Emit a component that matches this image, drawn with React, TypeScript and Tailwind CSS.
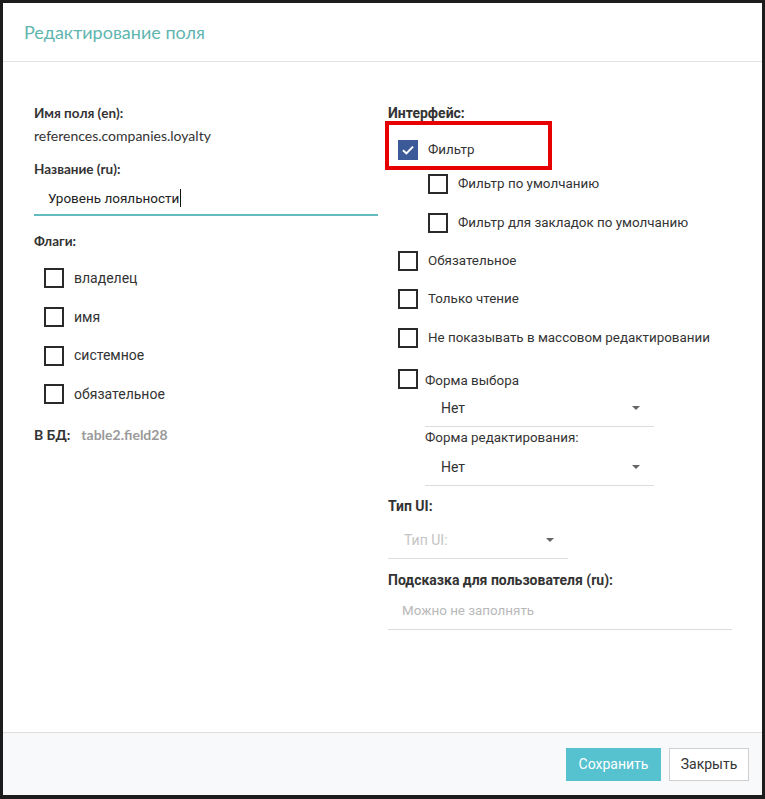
import React from "react";

const lato = { fontFamily: "Lato, 'Open Sans', sans-serif" };

const Box = ({ checked = false }: { checked?: boolean }) =>
  checked ? (
    <span className="flex h-[20px] w-[20px] shrink-0 items-center justify-center bg-[#3d5a98]">
      <svg width="14" height="12" viewBox="0 0 14 12" fill="none">
        <path d="M2 6.2 L5.4 9.4 L12 2.6" stroke="#fff" strokeWidth="2" />
      </svg>
    </span>
  ) : (
    <span className="block h-[20px] w-[20px] shrink-0 border-2 border-[#2a2a2a] bg-white" />
  );

const Row = ({
  label,
  checked,
  className,
}: {
  label: string;
  checked?: boolean;
  className: string;
}) => (
  <div className={"flex h-[20px] items-center gap-[10px] " + className}>
    <Box checked={checked} />
    <span className="text-[13.4px] text-[#333] font-['Roboto',sans-serif]">{label}</span>
  </div>
);

const Arrow = () => (
  <svg width="8" height="4" viewBox="0 0 8 4">
    <path d="M0 0 H8 L4 4 Z" fill="#666" />
  </svg>
);

const Select = ({
  value,
  placeholder,
  className,
}: {
  value: string;
  placeholder?: boolean;
  className: string;
}) => (
  <div
    className={
      "flex h-[37px] items-center justify-between border-b border-[#dcdcdc] pl-[16px] pr-[14px] font-['Roboto',sans-serif] text-[14px] " +
      (placeholder ? "text-[#c4c4c4] " : "text-[#333] ") +
      className
    }
  >
    <span>{value}</span>
    <Arrow />
  </div>
);

// left column labels
const Label = ({ children, className }: { children: React.ReactNode; className: string }) => (
  <div style={lato} className={"h-[18px] text-[13.5px] font-bold leading-[18px] text-[#333] " + className}>
    {children}
  </div>
);

// right column labels
const RLabel = ({ children, className }: { children: React.ReactNode; className: string }) => (
  <div className={"h-[18px] font-['Roboto',sans-serif] text-[14px] font-bold leading-[18px] text-[#333] " + className}>
    {children}
  </div>
);

export default function App() {
  return (
    <div className="h-[799px] w-[765px] bg-[#1c1c1c] pb-[4px] pl-[3px] pr-[3px] pt-[3px]">
      <div className="flex h-full flex-col bg-white">
        <div className="flex h-[59px] shrink-0 items-center border-b border-[#e3e3e3] pl-[21px]">
          <h1 style={lato} className="text-[18px] text-[#5fb5b0]">
            Редактирование поля
          </h1>
        </div>

        <div className="flex flex-1 gap-[10px] pl-[31px]">
          <div className="flex w-[344px] flex-col">
            <Label className="mt-[42px]">Имя поля (en):</Label>
            <div style={lato} className="mt-[4px] h-[20px] text-[14px] leading-[20px] text-[#333]">
              references.companies.loyalty
            </div>
            <Label className="mt-[14px]">Название (ru):</Label>
            <div className="mt-[4px] flex h-[34px] items-center border-b-2 border-[#62bcbf] pl-[14px] font-['Roboto',sans-serif] text-[13.5px] text-[#222]">
              Уровень лояльности
              <span className="ml-[1px] inline-block h-[18px] w-[1px] bg-[#111]" />
            </div>
            <Label className="mt-[16px]">Флаги:</Label>
            <div className="mt-[9px] flex flex-col pl-[10px]">
              {["владелец", "имя", "системное", "обязательное"].map((f) => (
                <div key={f} className="flex h-[38.7px] items-center gap-[10px]">
                  <Box />
                  <span className="text-[14px] text-[#333] font-['Roboto',sans-serif]">{f}</span>
                </div>
              ))}
            </div>
            <div style={lato} className="mt-[12px] flex h-[18px] items-center gap-[11px] text-[14px] font-bold">
              <span className="text-[#333]">В БД:</span>
              <span className="text-[#999]">table2.field28</span>
            </div>
          </div>

          <div className="flex w-[344px] flex-col">
            <RLabel className="mt-[42px]">Интерфейс:</RLabel>
            <div className="relative">
              <div className="pointer-events-none absolute left-[-3px] top-[-1px] h-[49px] w-[167px] border-[4px] border-[#e60000]" />
              <Row label="Фильтр" checked className="ml-[10px] mt-[18px]" />
            </div>
            <Row label="Фильтр по умолчанию" className="ml-[40px] mt-[14px]" />
            <Row label="Фильтр для закладок по умолчанию" className="ml-[40px] mt-[19px]" />
            <Row label="Обязательное" className="ml-[10px] mt-[18px]" />
            <Row label="Только чтение" className="ml-[10px] mt-[18px]" />
            <Row label="Не показывать в массовом редактировании" className="ml-[10px] mt-[19px]" />
            <div className="ml-[10px] mt-[21px] flex flex-col">
              <div className="flex h-[20px] items-center gap-[7px]">
                <Box />
                <span className="mt-[5px] text-[13.4px] text-[#333] font-['Roboto',sans-serif]">
                  Форма выбора
                </span>
              </div>
              <div className="ml-[27px] flex w-[229px] flex-col">
                <Select value="Нет" className="mt-[1px]" />
                <div className="mt-[2px] h-[18px] text-[13.4px] leading-[18px] text-[#333] font-['Roboto',sans-serif]">
                  Форма редактирования:
                </div>
                <Select value="Нет" className="mt-[2px]" />
              </div>
            </div>
            <RLabel className="mt-[11px]">Тип UI:</RLabel>
            <Select value="Тип UI:" placeholder className="mt-[7px] w-[180px]" />
            <RLabel className="mt-[12px]">Подсказка для пользователя (ru):</RLabel>
            <div className="mt-[5px] flex h-[36px] items-center border-b border-[#dcdcdc] pl-[14px] font-['Roboto',sans-serif] text-[13.4px] text-[#b8b8b8]">
              Можно не заполнять
            </div>
          </div>
        </div>

        <div className="flex h-[63px] shrink-0 items-center justify-end gap-[8px] border-t border-[#dedede] bg-[#f8f9fa] pr-[13px]">
          <button className="h-[33px] w-[95px] bg-[#56c2cf] text-[14px] text-white font-['Roboto',sans-serif]">
            Сохранить
          </button>
          <button className="h-[33px] w-[80px] border border-[#cfcfcf] bg-white text-[14px] text-[#333] font-['Roboto',sans-serif]">
            Закрыть
          </button>
        </div>
      </div>
    </div>
  );
}
